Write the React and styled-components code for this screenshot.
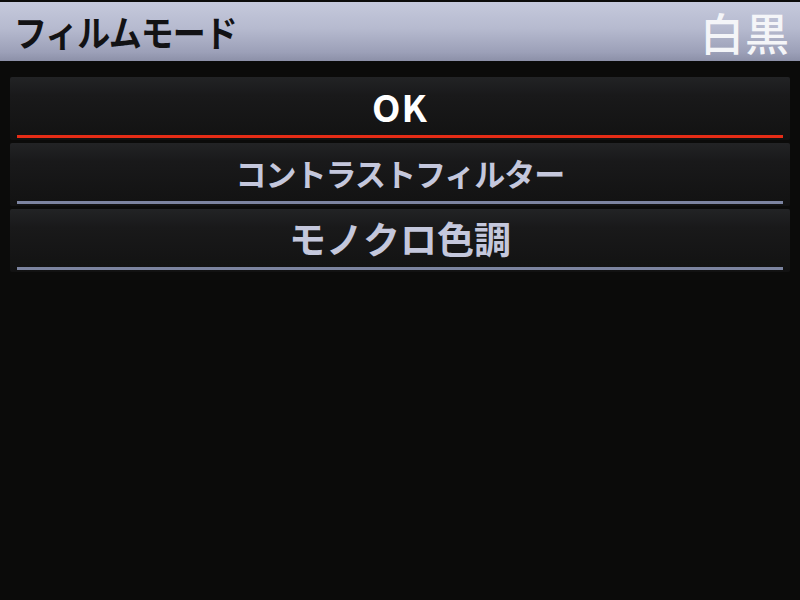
import React from 'react';
import styled, { createGlobalStyle } from 'styled-components';

const GlobalStyle = createGlobalStyle`
  html, body {
    margin: 0;
    padding: 0;
    background: #0b0b0a;
  }
  * { box-sizing: border-box; }
`;

const Screen = styled.div`
  width: 800px;
  height: 600px;
  background: #0b0b0a;
  font-family: "Noto Sans CJK JP", "Noto Sans", sans-serif;
  overflow: hidden;
  padding-top: 2px;
`;

// title bar with the current film mode on the right
const TitleBar = styled.header`
  height: 59px;
  display: flex;
  align-items: center;
  justify-content: space-between;
  padding: 0 10px 0 14px;
  background: linear-gradient(180deg, #c5c9dc 0%, #b6bacf 45%, #9ca0b8 85%, #8c90a8 100%);
`;

const Title = styled.h1`
  margin: 0;
  font-size: 33px;
  font-weight: 700;
  color: #121214;
  letter-spacing: -1px;
  transform: scaleY(1.1);
`;

const Value = styled.span`
  font-size: 44px;
  font-weight: 500;
  color: #f4f5f8;
  letter-spacing: 1px;
`;

const Menu = styled.ul`
  list-style: none;
  margin: 0;
  padding: 16px 10px 0 10px;
  display: flex;
  flex-direction: column;
  gap: 3px;
`;

const Item = styled.li`
  height: 63px;
  display: flex;
  flex-direction: column;
  padding-bottom: 2px;
  border-radius: 2px;
  background: linear-gradient(180deg, #222325 0%, #19191a 30%, #121212 100%);
`;

const Label = styled.div`
  flex: 1;
  display: flex;
  align-items: center;
  justify-content: center;
  color: ${p => (p.$active ? '#ffffff' : '#c4c7dc')};
  font-size: ${p => p.$size || 30}px;
  font-weight: ${p => (p.$active ? 700 : 600)};
  letter-spacing: ${p => p.$spacing ?? -1}px;
`;

const Rule = styled.div`
  height: 3px;
  margin: 0 7px;
  background: ${p => (p.$active ? '#e62c16' : '#7c84a0')};
`;

const items = [
  { text: 'OK', size: 37, spacing: 1, active: true },
  { text: 'コントラストフィルター', size: 31, spacing: -1 },
  { text: 'モノクロ色調', size: 37, spacing: 0 },
];

export default function App() {
  return (
    <>
      <GlobalStyle />
      <Screen>
        <TitleBar>
          <Title>フィルムモード</Title>
          <Value>白黒</Value>
        </TitleBar>
        <Menu>
          {items.map(item => (
            <Item key={item.text}>
              <Label $active={item.active} $size={item.size} $spacing={item.spacing}>
                {item.text}
              </Label>
              <Rule $active={item.active} />
            </Item>
          ))}
        </Menu>
      </Screen>
    </>
  );
}
